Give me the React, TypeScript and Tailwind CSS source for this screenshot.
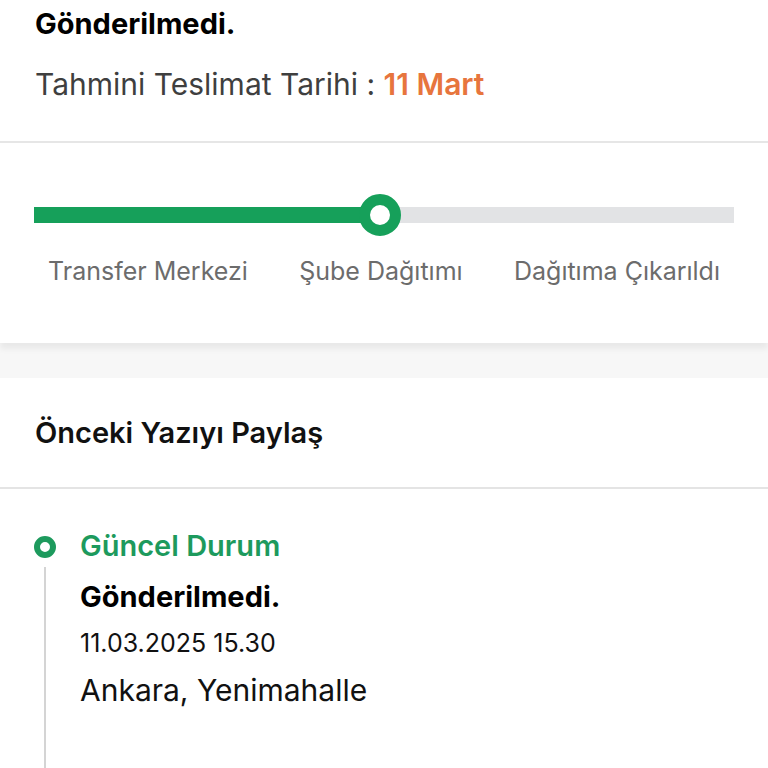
const steps = ["Transfer Merkezi", "Şube Dağıtımı", "Dağıtıma Çıkarıldı"];

function ProgressBar({ percent }: { percent: number }) {
  return (
    <div className="relative h-4 w-full bg-[#e2e3e5]">
      <div className="h-4 bg-[#16a05a]" style={{ width: `${percent}%` }} />
      <div
        className="absolute top-1/2 h-[42px] w-[42px] -translate-x-1/2 -translate-y-1/2 rounded-full border-[11px] border-[#16a05a] bg-white"
        style={{ left: `${percent}%` }}
      />
    </div>
  );
}

export default function App() {
  return (
    <div className="h-[768px] w-[768px] overflow-hidden bg-white font-['Inter',sans-serif]">
      <section className="border-b-2 border-[#e6e6e6] px-[35px] pb-[37px] pt-[6px]">
        <h1 className="m-0 text-[29px] font-bold leading-[36px] text-black">Gönderilmedi.</h1>
        <p className="m-0 mt-[22px] text-[30px] leading-[40px] text-[#3f3f3f]">
          Tahmini Teslimat Tarihi : <span className="font-semibold text-[#e7753d]">11 Mart</span>
        </p>
      </section>

      <section className="relative z-10 px-[34px] pb-[57px] pt-[64px] shadow-[0_6px_6px_rgba(0,0,0,0.06)]">
        <ProgressBar percent={49.4} />
        <div className="mt-[33px] flex justify-between px-[14px] text-[25px] leading-[30px] text-[#6c6c6c]">
          {steps.map((s) => (
            <span key={s}>{s}</span>
          ))}
        </div>
      </section>

      <div className="h-[35px] bg-[#f7f7f7]" />

      <section className="flex h-[111px] items-center border-b-2 border-[#e4e4e4] px-[35px]">
        <h2 className="m-0 text-[29px] font-semibold text-[#111]">Önceki Yazıyı Paylaş</h2>
      </section>

      <section className="flex gap-[24px] px-[34px] pt-[39px]">
        <div className="flex flex-col items-center">
          <div className="mt-[8px] h-[22px] w-[22px] rounded-full border-[6px] border-[#1d9a5d] bg-white" />
          <div className="mt-[9px] h-[240px] w-[2px] bg-[#d4d4d4]" />
        </div>
        <div>
          <p className="m-0 text-[29px] font-semibold leading-[36px] text-[#1d9a5d]">Güncel Durum</p>
          <p className="m-0 mt-[15px] text-[29px] font-bold leading-[36px] text-black">Gönderilmedi.</p>
          <p className="m-0 mt-[10px] text-[25px] leading-[36px] text-[#111]">11.03.2025 15.30</p>
          <p className="m-0 mt-[11px] text-[30px] leading-[36px] text-[#111]">Ankara, Yenimahalle</p>
        </div>
      </section>
    </div>
  );
}
